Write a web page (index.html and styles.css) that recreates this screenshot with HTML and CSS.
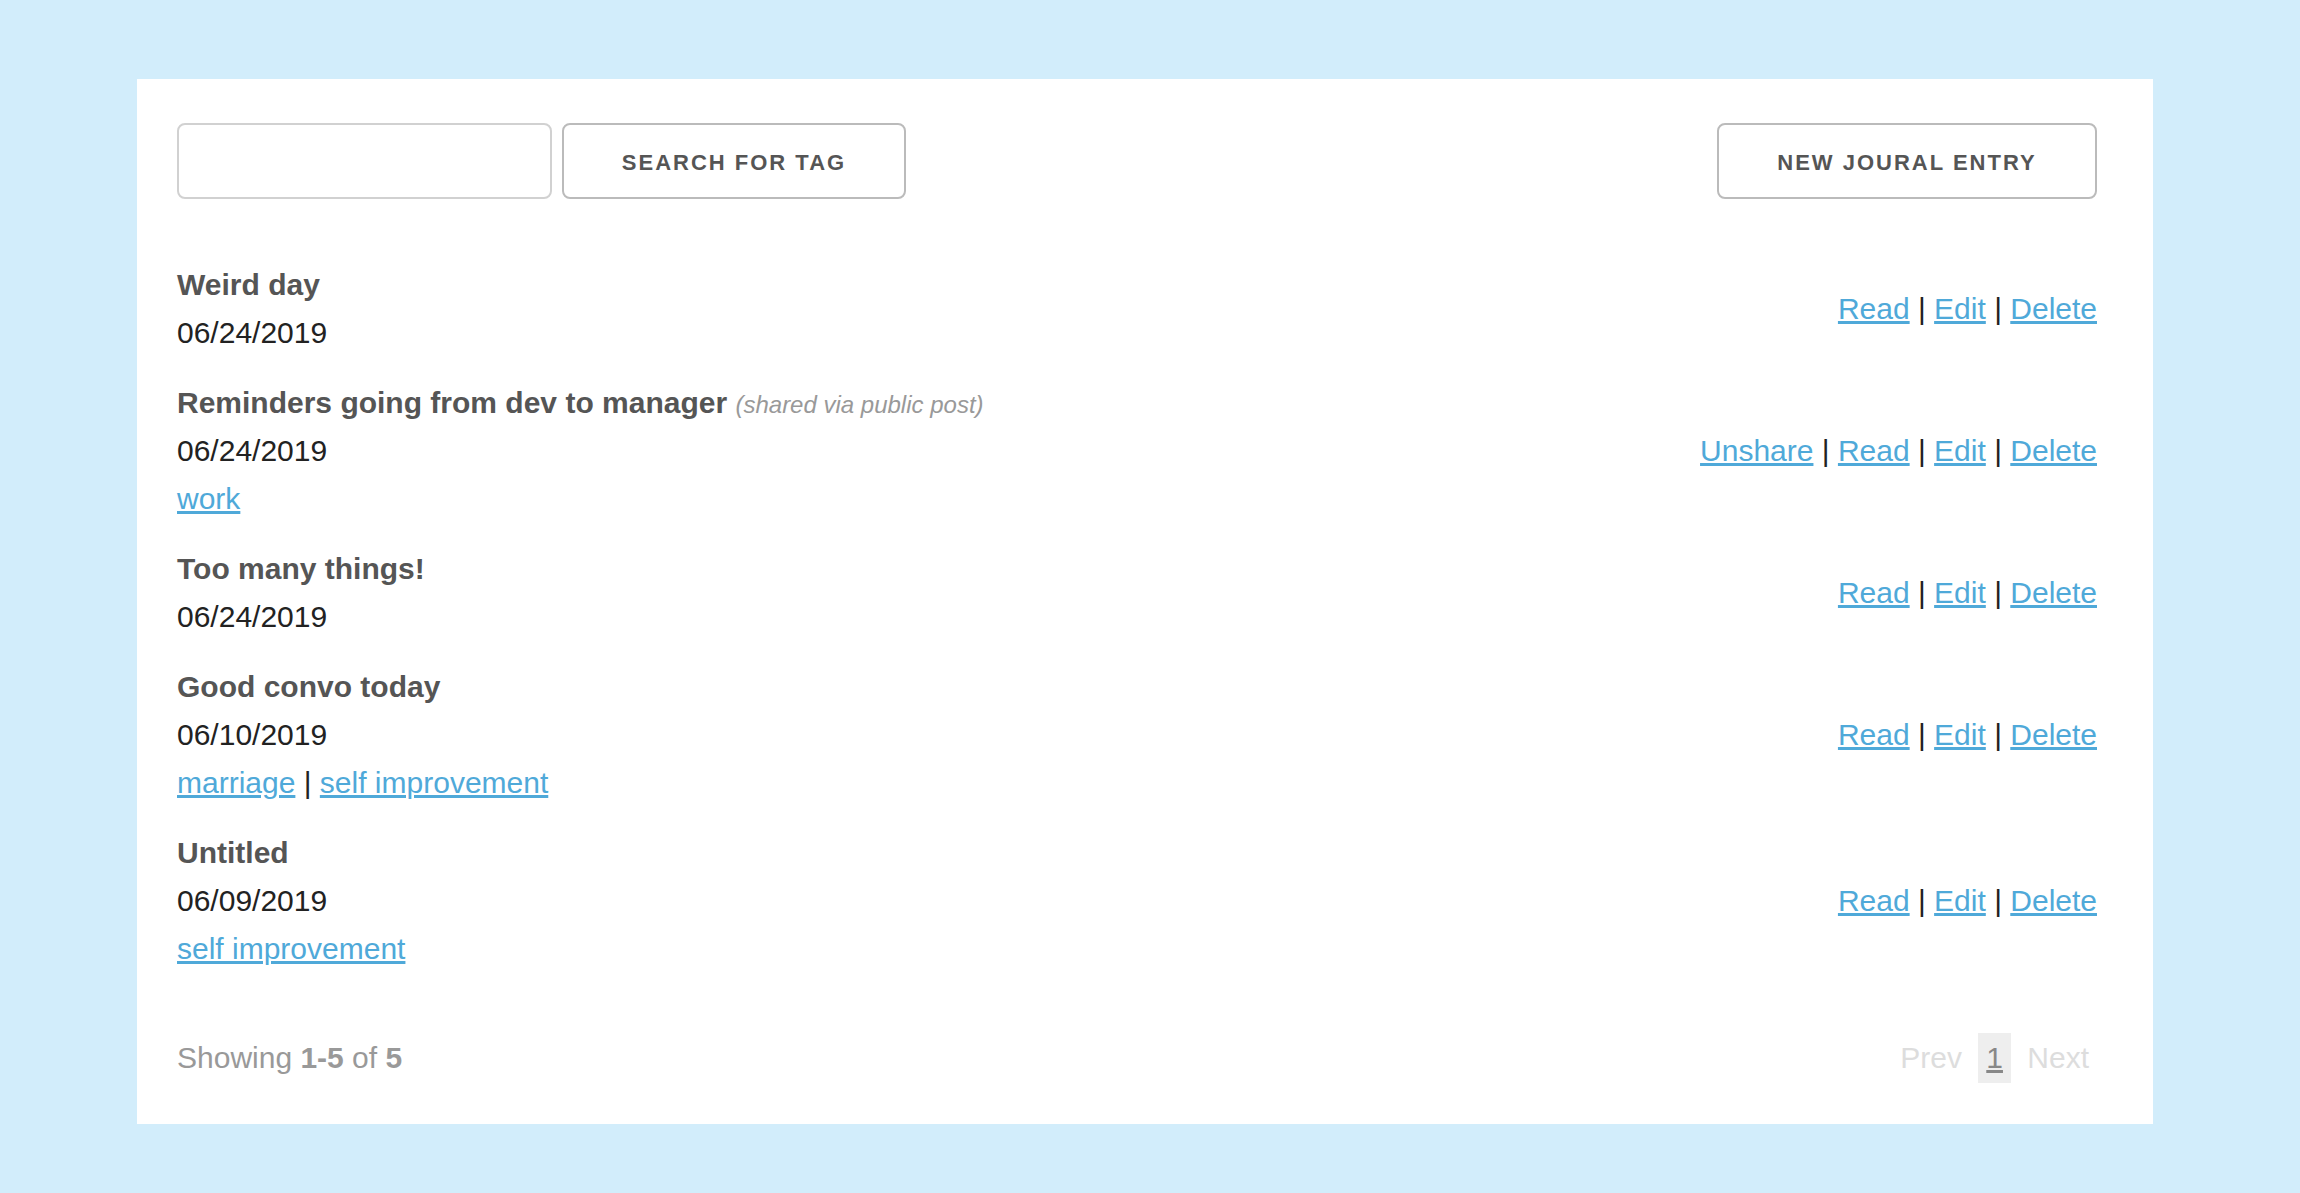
FILE: index.html
```html
<!DOCTYPE html>
<html lang="en">
<head>
<meta charset="utf-8">
<title>Journal</title>
<link rel="stylesheet" href="styles.css">
</head>
<body>
<div class="card">
  <div class="toolbar">
    <div class="search">
      <input class="search-input" type="text">
      <button class="btn btn-search">Search for tag</button>
    </div>
    <button class="btn btn-new">New Joural Entry</button>
  </div>

  <ul class="entries">
    <li class="entry">
      <div class="entry-info">
        <div class="entry-title">Weird day</div>
        <div class="entry-date">06/24/2019</div>
      </div>
      <div class="entry-actions"><a href="#">Read</a> | <a href="#">Edit</a> | <a href="#">Delete</a></div>
    </li>
    <li class="entry">
      <div class="entry-info">
        <div class="entry-title">Reminders going from dev to manager <span class="shared">(shared via public post)</span></div>
        <div class="entry-date">06/24/2019</div>
        <div class="entry-tags"><a href="#">work</a></div>
      </div>
      <div class="entry-actions"><a href="#">Unshare</a> | <a href="#">Read</a> | <a href="#">Edit</a> | <a href="#">Delete</a></div>
    </li>
    <li class="entry">
      <div class="entry-info">
        <div class="entry-title">Too many things!</div>
        <div class="entry-date">06/24/2019</div>
      </div>
      <div class="entry-actions"><a href="#">Read</a> | <a href="#">Edit</a> | <a href="#">Delete</a></div>
    </li>
    <li class="entry">
      <div class="entry-info">
        <div class="entry-title">Good convo today</div>
        <div class="entry-date">06/10/2019</div>
        <div class="entry-tags"><a href="#">marriage</a> | <a href="#">self improvement</a></div>
      </div>
      <div class="entry-actions"><a href="#">Read</a> | <a href="#">Edit</a> | <a href="#">Delete</a></div>
    </li>
    <li class="entry">
      <div class="entry-info">
        <div class="entry-title">Untitled</div>
        <div class="entry-date">06/09/2019</div>
        <div class="entry-tags"><a href="#">self improvement</a></div>
      </div>
      <div class="entry-actions"><a href="#">Read</a> | <a href="#">Edit</a> | <a href="#">Delete</a></div>
    </li>
  </ul>

  <div class="footer">
    <div class="showing">Showing <b>1-5</b> of <b>5</b></div>
    <div class="pager"><span class="page-link disabled">Prev</span> <span class="page-link current">1</span> <span class="page-link disabled">Next</span></div>
  </div>
</div>
</body>
</html>
```

FILE: styles.css
```css
html, body {
  margin: 0;
  padding: 0;
}
body {
  background: #d2edfb;
  font-family: "Liberation Sans", Arial, sans-serif;
  font-size: 30px;
  line-height: 48px;
  color: #222;
}
.card {
  box-sizing: border-box;
  margin: 79px 0 0 137px;
  width: 2016px;
  height: 1045px;
  background: #fff;
  padding: 44px 56px 0 40px;
}
.toolbar {
  display: flex;
  justify-content: space-between;
  align-items: center;
}
.search {
  display: flex;
  gap: 10px;
}
.search-input {
  box-sizing: border-box;
  width: 375px;
  height: 76px;
  border: 2px solid #d1d1d1;
  border-radius: 8px;
  background: #fff;
  margin: 0;
  padding: 12px 20px;
  font-family: inherit;
  font-size: 30px;
}
.btn {
  box-sizing: border-box;
  height: 76px;
  border: 2px solid #bbb;
  border-radius: 8px;
  background: #fff;
  color: #555;
  font-family: "Liberation Sans", Arial, sans-serif;
  font-size: 22px;
  font-weight: bold;
  letter-spacing: 2px;
  text-transform: uppercase;
  padding: 4px 0 0 0;
  margin: 0;
  line-height: 68px;
}
.btn-search {
  width: 344px;
}
.btn-new {
  width: 380px;
}
.entries {
  list-style: none;
  margin: 62px 0 0 0;
  padding: 0;
  display: flex;
  flex-direction: column;
  gap: 22px;
}
.entry {
  display: flex;
  justify-content: space-between;
  align-items: center;
}
.entry-title {
  font-weight: bold;
  color: #555;
}
.shared {
  font-weight: normal;
  font-style: italic;
  font-size: 24px;
  line-height: 1;
  color: #999;
}
.entry-date {
  color: #222;
}
a {
  color: #4fa9d9;
  text-decoration: underline;
}
.entry-actions {
  color: #222;
  white-space: nowrap;
}
.footer {
  margin-top: 60px;
  display: flex;
  justify-content: space-between;
  align-items: center;
  height: 50px;
}
.showing {
  color: #999;
}
.showing b {
  font-weight: bold;
}
.pager {
  line-height: 50px;
}
.page-link {
  display: inline-block;
  padding: 0 8px;
}
.page-link.disabled {
  color: #ddd;
}
.page-link.current {
  background: #eee;
  color: #888;
  text-decoration: underline;
}
```
